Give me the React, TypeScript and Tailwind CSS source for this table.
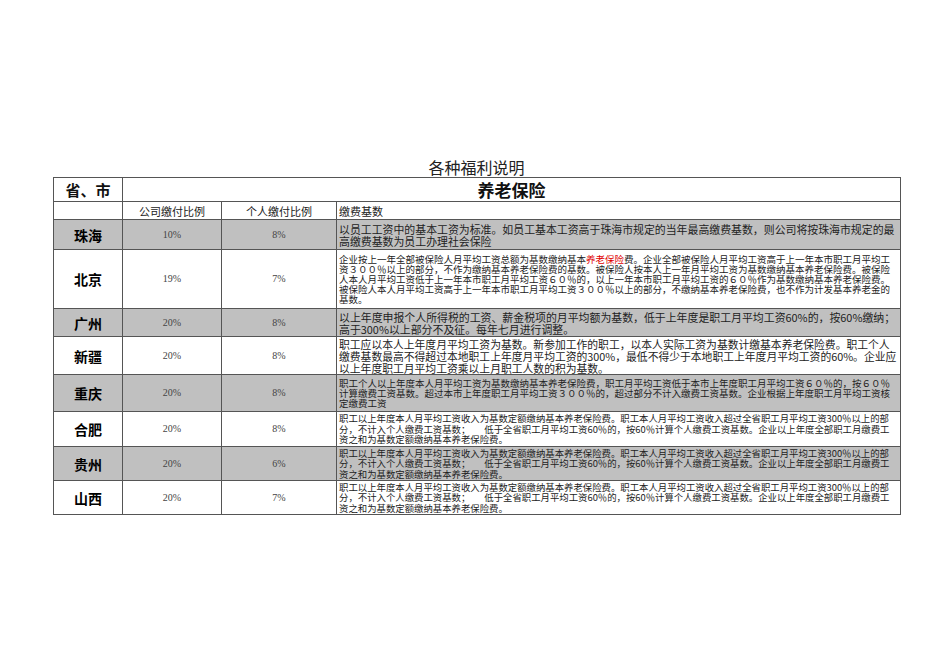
import React from "react";

type Row = {
  name: string;
  a: string;
  b: string;
  grey: boolean;
  h: string;
  txt: string;
  lines: React.ReactNode[];
};

const hefei = [
  "职工以上年度本人月平均工资收入为基数定额缴纳基本养老保险费。职工本人月平均工资收入超过全省职工月平均工资300％以上的部",
  "分，不计入个人缴费工资基数；　　低于全省职工月平均工资60％的，按60％计算个人缴费工资基数。企业以上年度全部职工月缴费工",
  "资之和为基数定额缴纳基本养老保险费。",
];

const rows: Row[] = [
  {
    name: "珠海",
    a: "10%",
    b: "8%",
    grey: true,
    h: "h-[30px]",
    txt: "text-[10.9px] leading-[12px]",
    lines: [
      "以员工工资中的基本工资为标准。如员工基本工资高于珠海市规定的当年最高缴费基数，则公司将按珠海市规定的最",
      "高缴费基数为员工办理社会保险",
    ],
  },
  {
    name: "北京",
    a: "19%",
    b: "7%",
    grey: false,
    h: "h-[59px]",
    txt: "text-[9.5px] leading-[10px]",
    lines: [
      <>
        企业按上一年全部被保险人月平均工资总额为基数缴纳基本
        <span className="text-[#e00000]">养老保险</span>
        费。企业全部被保险人月平均工资高于上一年本市职工月平均工
      </>,
      "资３００％以上的部分，不作为缴纳基本养老保险费的基数。被保险人按本人上一年月平均工资为基数缴纳基本养老保险费。被保险",
      "人本人月平均工资低于上一年本市职工月平均工资６０％的，以上一年本市职工月平均工资的６０％作为基数缴纳基本养老保险费。",
      "被保险人本人月平均工资高于上一年本市职工月平均工资３００％以上的部分，不缴纳基本养老保险费，也不作为计发基本养老金的",
      "基数。",
    ],
  },
  {
    name: "广州",
    a: "20%",
    b: "8%",
    grey: true,
    h: "h-[28px]",
    txt: "text-[10.9px] leading-[12px]",
    lines: [
      "以上年度申报个人所得税的工资、薪金税项的月平均额为基数，低于上年度是职工月平均工资60%的，按60%缴纳；",
      "高于300%以上部分不及征。每年七月进行调整。",
    ],
  },
  {
    name: "新疆",
    a: "20%",
    b: "8%",
    grey: false,
    h: "h-[38px]",
    txt: "text-[10.8px] leading-[12px]",
    lines: [
      "职工应以本人上年度月平均工资为基数。新参加工作的职工，以本人实际工资为基数计缴基本养老保险费。职工个人",
      "缴费基数最高不得超过本地职工上年度月平均工资的300%，最低不得少于本地职工上年度月平均工资的60%。企业应",
      "以上年度职工月平均工资乘以上月职工人数的积为基数。",
    ],
  },
  {
    name: "重庆",
    a: "20%",
    b: "8%",
    grey: true,
    h: "h-[37px]",
    txt: "text-[9.5px] leading-[10px]",
    lines: [
      "职工个人以上年度本人月平均工资为基数缴纳基本养老保险费，职工月平均工资低于本市上年度职工月平均工资６０％的，按６０％",
      "计算缴费工资基数。超过本市上年度职工月平均工资３００％的，超过部分不计入缴费工资基数。企业根据上年度职工月平均工资核",
      "定缴费工资",
    ],
  },
  {
    name: "合肥",
    a: "20%",
    b: "8%",
    grey: false,
    h: "h-[35px]",
    txt: "text-[9.4px] leading-[10.5px]",
    lines: hefei,
  },
  {
    name: "贵州",
    a: "20%",
    b: "6%",
    grey: true,
    h: "h-[34px]",
    txt: "text-[9.4px] leading-[10.5px]",
    lines: hefei,
  },
  {
    name: "山西",
    a: "20%",
    b: "7%",
    grey: false,
    h: "h-[34px]",
    txt: "text-[9.4px] leading-[10.5px]",
    lines: hefei,
  },
];

export default function App() {
  return (
    <div className="min-h-[672px] w-[950px] bg-white pt-[157px] font-['Noto_Sans_CJK_SC',sans-serif] text-[#111]">
      <div className="ml-[53px] w-[847px]">
        <div className="h-[20px] text-center text-[16px] leading-[20px] text-[#222]">
          各种福利说明
        </div>
        <table className="w-[847px] table-fixed border-collapse border border-black">
          <colgroup>
            <col className="w-[69px]" />
            <col className="w-[99px]" />
            <col className="w-[115px]" />
            <col className="w-[564px]" />
          </colgroup>
          <tbody>
            <tr className="h-[24px]">
              <td className="border border-[#555] p-0 text-center text-[15px] font-bold leading-[20px]">
                省、市
              </td>
              <td
                colSpan={3}
                className="border border-[#555] p-0 text-center text-[17px] font-bold leading-[20px]"
              >
                养老保险
              </td>
            </tr>
            <tr className="h-[18px]">
              <td className="border border-[#555] p-0"></td>
              <td className="border border-[#555] p-0 text-center text-[11px] leading-[14px] text-[#222]">
                公司缴付比例
              </td>
              <td className="border border-[#555] p-0 text-center text-[11px] leading-[14px] text-[#222]">
                个人缴付比例
              </td>
              <td className="border border-[#555] py-0 pl-[2px] text-left text-[11px] leading-[14px] text-[#222]">
                缴费基数
              </td>
            </tr>
            {rows.map((r) => (
              <tr
                key={r.name}
                className={`${r.h} ${r.grey ? "bg-[#c0c0c0]" : "bg-white"}`}
              >
                <td className="border border-[#555] p-0 text-center align-middle text-[14px] font-bold leading-[18px] text-black">
                  {r.name}
                </td>
                <td className="border border-[#555] p-0 text-center align-middle font-['Liberation_Serif',serif] text-[10px] leading-[12px] text-[#444]">
                  {r.a}
                </td>
                <td className="border border-[#555] p-0 text-center align-middle font-['Liberation_Serif',serif] text-[10px] leading-[12px] text-[#444]">
                  {r.b}
                </td>
                <td
                  className={`overflow-hidden border border-[#555] py-0 pl-[2px] pr-0 text-left align-middle text-[#222] ${r.txt}`}
                >
                  {r.lines.map((l, i) => (
                    <div key={i} className="whitespace-nowrap">
                      {l}
                    </div>
                  ))}
                </td>
              </tr>
            ))}
          </tbody>
        </table>
      </div>
    </div>
  );
}
